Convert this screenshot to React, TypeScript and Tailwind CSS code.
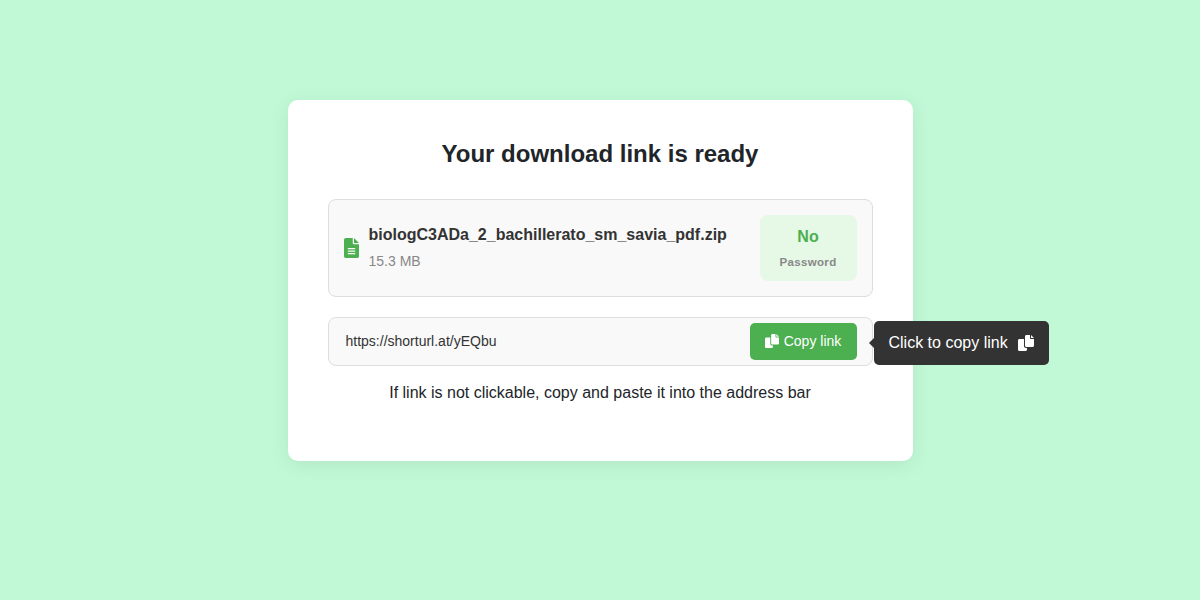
import React from "react";

//Page with a folded corner and three lines of text
const FileIcon = ({ className }: { className: string }) => {
    return (
        <svg viewBox="0 0 384 512" fill="currentColor" className={className}>
            <path d="M256 0v128h128L256 0zM224 128V0H48C21.5 0 0 21.5 0 48v416c0 26.5 21.5 48 48 48h288c26.5 0 48-21.5 48-48V160H256c-17.7 0-32-14.3-32-32z" />
            <path d="M112 272h160M112 336h160M112 400h160" stroke="#f9f9f9" strokeWidth="36" strokeLinecap="round" />
        </svg>
    );
};

//Two overlapping sheets, the back one sticks out at the bottom left
const CopyIcon = ({ className }: { className: string }) => {
    return (
        <svg viewBox="0 0 512 512" fill="currentColor" className={className}>
            <path d="M384 96V0H272c-26.5 0-48 21.5-48 48v288c0 26.5 21.5 48 48 48h192c26.5 0 48-21.5 48-48V128h-96c-17.6 0-32-14.4-32-32zM416 0v96h96L416 0zM192 352V128H48c-26.5 0-48 21.5-48 48v288c0 26.5 21.5 48 48 48h192c26.5 0 48-21.5 48-48v-48h-32c-35.3 0-64-28.7-64-64z" />
        </svg>
    );
};

//Dark bubble that points at the copy button from outside the card
const CopyTooltip = () => {
    return (
        <div className="absolute left-[545px] top-[3px] flex h-11 w-[175px] items-center rounded-[5px] bg-[#333] pl-[15px] text-base text-white">
            <span className="absolute -left-[5px] top-[17px] border-y-5 border-r-5 border-y-transparent border-r-[#333]" />
            <span>Click to copy link</span>
            <CopyIcon className="ml-[10px] h-4 w-4" />
        </div>
    );
};

const App = () => {
    return (
        <div className="flex min-h-screen justify-center bg-[#c1f9d6] pt-[100px] font-['Liberation_Sans',Arial,sans-serif] text-[#212529]">
            <div className="h-[361px] w-[625px] rounded-[10px] bg-white px-10 pt-[39px] text-center shadow-[0_4px_20px_rgba(0,0,0,0.08)]">
                <h1 className="text-2xl font-bold leading-[29px]">Your download link is ready</h1>

                <div className="mt-[31px] flex h-[98px] items-center justify-between rounded-lg border border-[#ddd] bg-[#f9f9f9] px-[15px] text-left">
                    <div className="flex items-center">
                        <FileIcon className="mr-[10px] h-5 w-[15px] text-[#4caf50]" />
                        <div>
                            <p className="text-base font-bold leading-6 text-[#333]">biologC3ADa_2_bachillerato_sm_savia_pdf.zip</p>
                            <p className="mt-1 mb-px text-sm leading-[21px] text-[#888]">15.3 MB</p>
                        </div>
                    </div>
                    <div className="flex h-[66px] w-[97px] flex-col items-center rounded-lg bg-[#e6f8e6] pt-[10px] font-bold">
                        <span className="text-base leading-6 text-[#4caf50]">No</span>
                        <span className="mt-1 text-[11.5px] leading-[18px] tracking-[0.35px] text-[#888]">Password</span>
                    </div>
                </div>

                <div className="relative mt-5 flex h-[49px] items-center justify-between rounded-lg border border-[#ddd] bg-[#f9f9f9] pl-[17px] pr-[15px]">
                    <span className="pb-0.5 text-sm text-[#333]">https://shorturl.at/yEQbu</span>
                    <button className="flex h-[37px] w-[107px] items-center justify-center rounded-[5px] bg-[#4caf50] text-sm text-white">
                        <CopyIcon className="mr-[5px] mb-0.5 h-[14px] w-[14px]" />
                        <span className="pb-0.5">Copy link</span>
                    </button>
                    <CopyTooltip />
                </div>

                <p className="mt-[15px] text-base leading-6">If link is not clickable, copy and paste it into the address bar</p>
            </div>
        </div>
    );
};

export default App;
